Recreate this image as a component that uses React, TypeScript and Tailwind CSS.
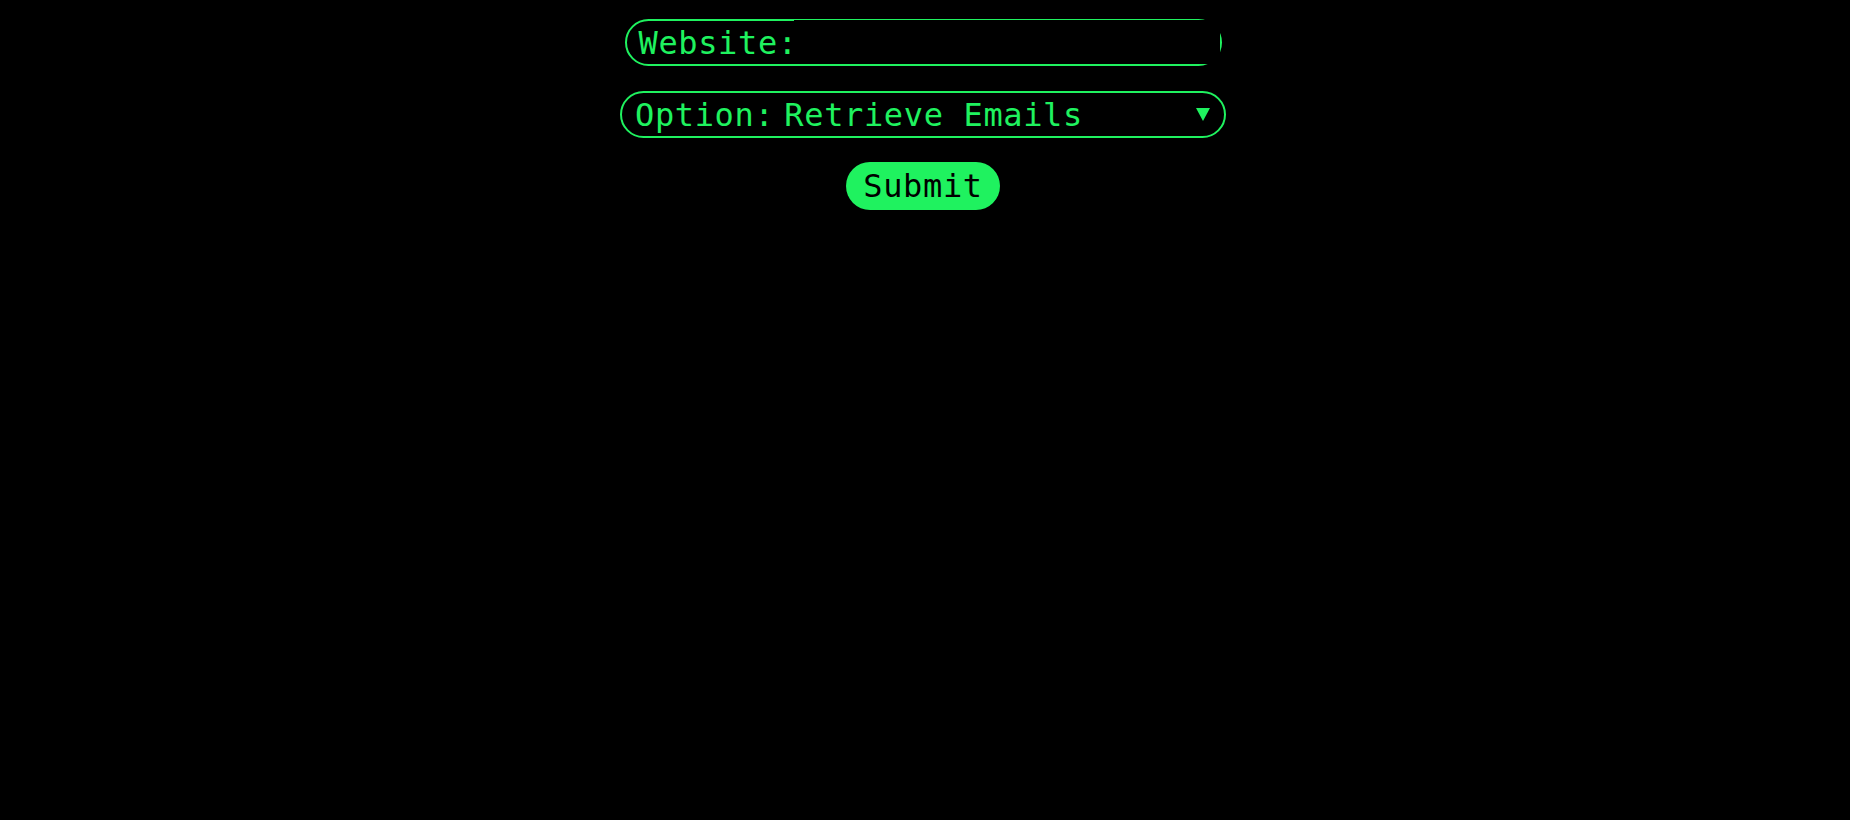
import React from "react";

export default function App() {
  return (
    <div className="min-h-screen w-full bg-black font-['DejaVu_Sans_Mono',monospace] text-[32px] leading-none tracking-[0.02em] text-[#1ff25f]">
      <div className="flex flex-col items-center pt-[19px] pr-[4px]">
        <div className="flex h-[47px] w-[597px] items-center rounded-full border-2 border-[#1ff25f] pl-[12px]">
          <span className="shrink-0">Website:</span>
          <input
            type="text"
            className="-mt-px ml-[-4px] h-[44px] min-w-0 flex-1 self-start bg-black text-[#1ff25f] outline-none"
          />
        </div>
        <div className="mt-[25px] flex h-[47px] w-[606px] items-center rounded-full border-2 border-[#1ff25f] pl-[13px] pr-[14px]">
          <span>Option:</span>
          <span className="ml-[10px]">Retrieve Emails</span>
          <div className="flex-1" />
          <svg width="14" height="13" viewBox="0 0 14 13" className="shrink-0">
            <polygon points="0,0 14,0 7,13" fill="#1ff25f" />
          </svg>
        </div>
        <button className="mt-[24px] flex h-[48px] items-center rounded-full bg-[#1ff25f] px-[17px] text-black">
          Submit
        </button>
      </div>
    </div>
  );
}
